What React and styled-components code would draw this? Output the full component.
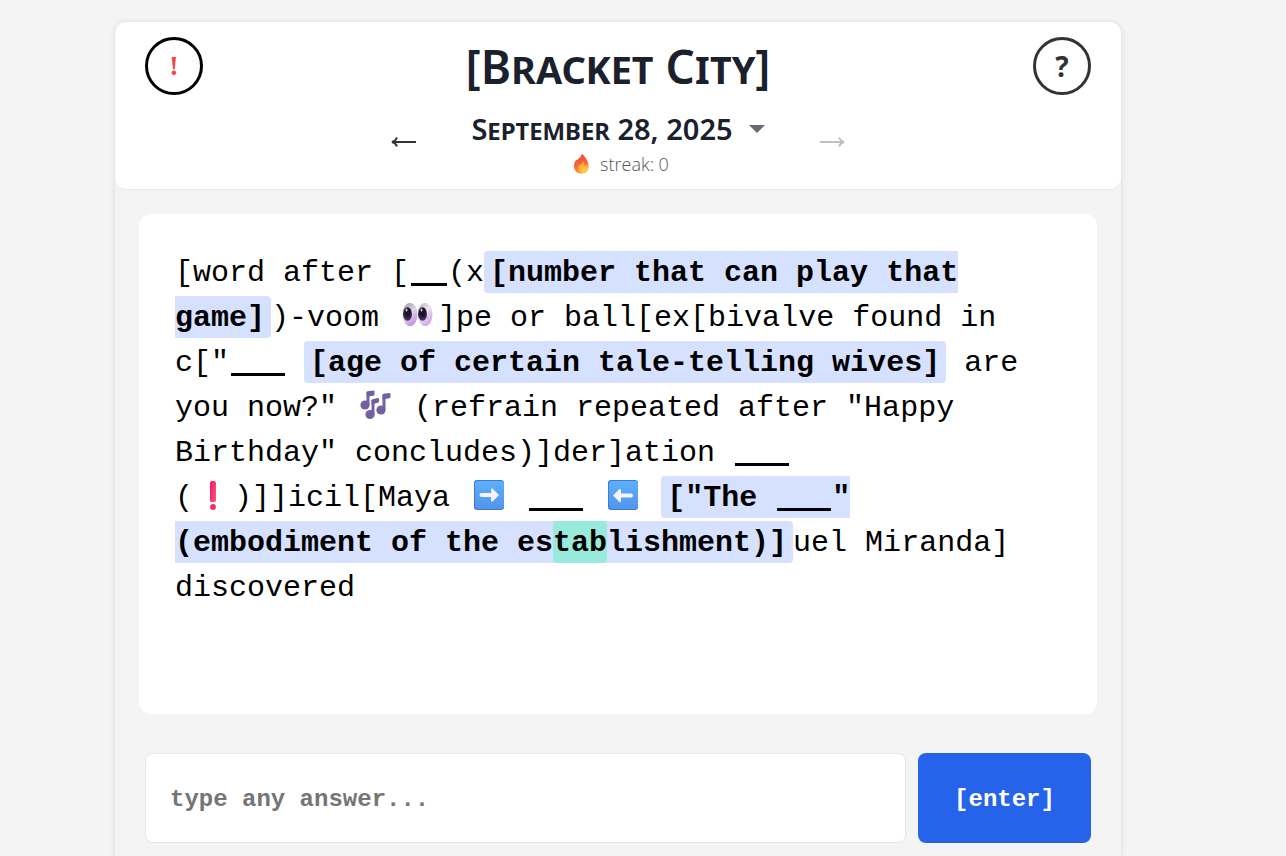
import React from "react";
import styled, { createGlobalStyle } from "styled-components";

const sans = '"Noto Sans", "Open Sans", sans-serif';
const mono = '"Liberation Mono", monospace';

const GlobalStyle = createGlobalStyle`
  *, *::before, *::after { box-sizing: border-box; }
  body { margin: 0; background: #f4f4f4; font-family: ${sans}; color: #1a202c; }
  button, input { font: inherit; color: inherit; }
  button { padding: 0; border: 0; background: none; cursor: pointer; }
`;

const Page = styled.div`
  display: flex;
  justify-content: center;
  min-height: 100vh;
  padding: 21px 50px 0 0;
`;

const Game = styled.main`
  display: flex;
  flex-direction: column;
  width: 100%;
  max-width: 1008px;
  border: 1px solid #e2e8f0;
  border-bottom: 0;
  border-radius: 12px 12px 0 0;
  box-shadow: 0 1px 6px rgba(0, 0, 0, 0.08);
`;

const Header = styled.header`
  display: grid;
  grid-template-columns: 58px 1fr 58px;
  align-items: start;
  padding: 15px 30px 12px;
  background: #fff;
  border-bottom: 1px solid #e2e8f0;
  border-radius: 12px;
`;

const RoundButton = styled.button`
  width: 58px;
  height: 58px;
  border: 3px solid ${(p) => p.$ring};
  border-radius: 50%;
  color: ${(p) => p.$ink};
  font-family: ${(p) => p.$family};
  font-size: 28px;
  font-weight: 700;
  line-height: 52px;
  text-align: center;
`;

const Masthead = styled.div`
  display: flex;
  flex-direction: column;
  align-items: center;
  gap: 11px;
`;

const Title = styled.h1`
  margin: 0;
  font-size: 46px;
  font-weight: 600;
  line-height: 58px;
  font-variant: small-caps;
  white-space: nowrap;
`;

const TitleBracket = styled.span`
  font-variant: normal;
`;

const DateNav = styled.nav`
  display: flex;
  align-items: center;
  justify-content: space-between;
  width: 100%;
  max-width: 456px;
`;

const ArrowButton = styled.button`
  display: flex;
  align-items: center;
  height: 30px;
  color: #333;
  &:disabled { color: #c0c0c0; cursor: default; }
`;

const DateBlock = styled.div`
  display: flex;
  flex-direction: column;
  align-items: center;
`;

const DateButton = styled.button`
  display: flex;
  align-items: center;
  gap: 16px;
  font-size: 29px;
  font-weight: 600;
  line-height: 45px;
  font-variant: small-caps;
  white-space: nowrap;
`;

const Streak = styled.div`
  display: flex;
  align-items: center;
  gap: 10px;
  padding-left: 6px;
  color: #555;
  font-family: "Open Sans", sans-serif;
  font-size: 18px;
  font-weight: 300;
  line-height: 26px;
`;

const Puzzle = styled.section`
  min-height: 500px;
  margin: 24px;
  padding: 37px 36px 35px;
  border-radius: 12px;
  background: #fff;
`;

const Clue = styled.p`
  margin: 0;
  color: #000;
  font-family: ${mono};
  font-size: 30px;
  line-height: 45px;
`;

const Active = styled.strong`
  padding: 5px 6px 3px;
  border-radius: 4px;
  background: #d6e0ff;
  font-weight: 700;
`;

const Found = styled.mark`
  padding: 5px 0 3px;
  border-radius: 4px;
  background: #98ebdc;
  color: inherit;
`;

const Unbroken = styled.span`
  white-space: nowrap;
`;

const BlankLine = styled.span`
  display: inline-block;
  width: ${(p) => p.$letters * 18}px;
  height: 3px;
  margin: 0 1px 0 2px;
  background: #000;
  vertical-align: -5px;
`;

const Glyph = styled.svg`
  width: 41px;
  height: 32px;
  vertical-align: -4px;
`;

const AnswerForm = styled.form`
  display: flex;
  gap: 12px;
  padding: 15px 30px 13px;
`;

const AnswerInput = styled.input`
  flex: 1;
  min-width: 0;
  height: 90px;
  padding: 2px 24px 0;
  border: 1px solid #e2e8f0;
  border-radius: 8px;
  background: #fff;
  font-family: ${mono};
  font-size: 24px;
  font-weight: 700;
  &::placeholder { color: #757575; opacity: 1; }
`;

const EnterButton = styled.button`
  width: 173px;
  height: 90px;
  padding-top: 2px;
  border-radius: 8px;
  background: #2563eb;
  color: #fff;
  font-family: ${mono};
  font-size: 24px;
  font-weight: 700;
`;

function Blank({ letters = 3 }) {
  return <BlankLine $letters={letters} role="img" aria-label="blank" />;
}

function LongArrow({ flip }) {
  return (
    <svg width="27" height="14" viewBox="0 0 27 14" fill="none" stroke="currentColor" strokeWidth="2" aria-hidden="true">
      <path d={flip ? "M1 7H25M20 2.500C21 5 23 6.500 25 7C23 7.500 21 9 20 11.500" : "M26 7H2M7 2.500C6 5 4 6.500 2 7C4 7.500 6 9 7 11.500"} />
    </svg>
  );
}

function Flame() {
  return (
    <svg width="17" height="20" viewBox="0 0 17 20" aria-hidden="true">
      <defs>
        <linearGradient id="flameOuter" x1="0" y1="0" x2="0.3" y2="1">
          <stop offset="0" stopColor="#e8313f" />
          <stop offset="0.55" stopColor="#f8643a" />
          <stop offset="1" stopColor="#ff8b35" />
        </linearGradient>
        <radialGradient id="flameInner" cx="0.6" cy="0.8" r="0.7">
          <stop offset="0" stopColor="#ffd83d" />
          <stop offset="1" stopColor="#ff9a36" />
        </radialGradient>
      </defs>
      <path fill="url(#flameOuter)" d="M9 0C12 2.500 15.500 7 15.500 12C15.500 16.500 13 19.500 8.500 19.500C4 19.500 1 16.500 1 12C1 8.500 2.500 6.500 4 5.500L4.500 6L6.500 3.500L7 4C7.500 3 8 1.500 9 0Z" />
      <path fill="url(#flameInner)" d="M10.500 7C10 10 5 10.500 5 14.500C5 17.500 7 19 9.500 19C13 19 15 16.500 15 13.500C15 12 14.500 11 14 10C13.500 12 12 12 11.500 11.500C11 10 11.500 8.500 10.500 7Z" />
    </svg>
  );
}

function Eyes() {
  return (
    <Glyph viewBox="0 0 41 32" role="img" aria-label="eyes">
      <defs>
        <linearGradient id="eyeball" x1="0.2" y1="0" x2="0.7" y2="1">
          <stop offset="0" stopColor="#a09ba0" />
          <stop offset="0.45" stopColor="#e0d8e4" />
          <stop offset="1" stopColor="#c58be0" />
        </linearGradient>
        <linearGradient id="eyeballLight" x1="0" y1="0" x2="0.7" y2="1">
          <stop offset="0" stopColor="#b5aeb8" />
          <stop offset="0.5" stopColor="#ebe5ef" />
          <stop offset="1" stopColor="#cfa4e4" />
        </linearGradient>
      </defs>
      <ellipse cx="13" cy="16.500" rx="7.500" ry="11.500" fill="url(#eyeball)" />
      <ellipse cx="28" cy="16.500" rx="7.500" ry="11.500" fill="url(#eyeballLight)" />
      <ellipse cx="10.500" cy="16" rx="4.500" ry="6.800" fill="#402b55" />
      <ellipse cx="25.500" cy="16" rx="4.500" ry="6.800" fill="#402b55" />
      <ellipse cx="10.500" cy="14.500" rx="3.300" ry="4.800" fill="#1c1429" />
      <ellipse cx="25.500" cy="14.500" rx="3.300" ry="4.800" fill="#1c1429" />
      <ellipse cx="9.500" cy="12" rx="1" ry="1.500" fill="#cfc8d6" />
      <ellipse cx="24.500" cy="12" rx="1" ry="1.500" fill="#cfc8d6" />
    </Glyph>
  );
}

function Notes() {
  return (
    <Glyph viewBox="0 0 41 32" role="img" aria-label="musical notes">
      <g fill="#7361a5">
        <circle cx="10" cy="17" r="4.600" />
        <circle cx="15" cy="26.500" r="4.600" />
        <circle cx="26" cy="22" r="4.600" />
      </g>
      <g fill="none" stroke="#7361a5" strokeWidth="3">
        <path d="M13 17.500V4" />
        <path d="M18 27V12" />
        <path d="M29 22V7" />
      </g>
      <path
        fill="#7361a5"
        d="M11.500 4Q11.500 3.300 12.500 3.200L18.500 2.500Q19.500 2.500 19.500 3.500V6.500Q19.500 7.500 18.500 7.700L11.500 8.500ZM16.500 12.500Q16.500 11.500 17.500 11.300L22.500 10Q24 9.800 24 11V13.500Q24 14.500 23 14.800L16.500 16.500ZM27.500 7Q27.500 6 28.500 5.800L34 5Q35.500 5 35.500 6V9Q35.500 10 34.500 10.200L27.500 11.500Z"
      />
    </Glyph>
  );
}

function Exclamation() {
  return (
    <Glyph viewBox="0 0 41 32" role="img" aria-label="exclamation mark">
      <defs>
        <linearGradient id="exclaim" x1="0" y1="0" x2="1" y2="0.6">
          <stop offset="0" stopColor="#ed1767" />
          <stop offset="1" stopColor="#fb5070" />
        </linearGradient>
      </defs>
      <path fill="url(#exclaim)" d="M17 5Q17 3 19 3H21Q23 3 23 5V22Q23 24 21.500 24H18.500Q17 24 17 22Z" />
      <circle cx="20" cy="29" r="2.900" fill="#f4305f" />
    </Glyph>
  );
}

function ArrowTile({ left }) {
  return (
    <Glyph viewBox="0 0 41 32" role="img" aria-label={left ? "left arrow" : "right arrow"}>
      <defs>
        <linearGradient id="tile" x1="0" y1="0" x2="0" y2="1">
          <stop offset="0" stopColor="#5bb1fb" />
          <stop offset="1" stopColor="#5394ec" />
        </linearGradient>
      </defs>
      <rect x="6" y="2" width="30" height="30" rx="3" fill="#4079cf" />
      <rect x="7" y="3" width="29" height="28" rx="3" fill="url(#tile)" />
      <path
        fill="#f8f1ff"
        d={
          left
            ? "M11 17.500L17.500 11Q19 10.500 19 12V15.500H29Q31 15.500 31 17.500Q31 19.500 29 19.500H19V23Q19 24.500 17.500 24Z"
            : "M31 17L24.500 10.500Q23 10 23 11.500V15H13.500Q11.500 15 11.500 17Q11.500 19 13.500 19H23V22.500Q23 24 24.500 23.500Z"
        }
      />
    </Glyph>
  );
}

export default function App() {
  return (
    <>
      <GlobalStyle />
      <Page>
        <Game>
          <Header>
            <RoundButton type="button" $ring="#000" $ink="#ef4444" $family='"Liberation Serif", serif'>
              !
            </RoundButton>
            <Masthead>
              <Title>
                <TitleBracket>[</TitleBracket>Bracket City<TitleBracket>]</TitleBracket>
              </Title>
              <DateNav aria-label="Puzzle date">
                <ArrowButton type="button" aria-label="Previous day">
                  <LongArrow />
                </ArrowButton>
                <DateBlock>
                  <DateButton type="button" aria-haspopup="dialog">
                    September 28, 2025
                    <svg width="16" height="8" viewBox="0 0 16 8" aria-hidden="true">
                      <path d="M0 0H16L8 8Z" fill="#666b75" />
                    </svg>
                  </DateButton>
                  <Streak>
                    <Flame />
                    <span>streak: 0</span>
                  </Streak>
                </DateBlock>
                <ArrowButton type="button" aria-label="Next day" disabled>
                  <LongArrow flip />
                </ArrowButton>
              </DateNav>
            </Masthead>
            <RoundButton type="button" $ring="#333" $ink="#333" $family={sans}>
              ?
            </RoundButton>
          </Header>

          <Puzzle>
            <Clue>
              [word after [<Blank letters={2} />(x<Active>[number that can play that game]</Active>)-voom{" "}
              <Unbroken><Eyes />]pe</Unbroken> or ball[ex[bivalve found in{" "}
              <Unbroken>c["<Blank /></Unbroken>{" "}
              <Active>[age of certain tale-telling wives]</Active> are you now?" <Notes />{" "}
              (refrain repeated after "Happy Birthday" concludes)]der]ation <Blank />{" "}
              <Unbroken>(<Exclamation />)]]icil[Maya</Unbroken> <ArrowTile /> <Blank /> <ArrowTile left />{" "}
              <Active>
                ["The <Blank />" (embodiment of the es<Found>tab</Found>lishment)]
              </Active>
              uel Miranda] discovered
            </Clue>
          </Puzzle>

          <AnswerForm onSubmit={(event) => event.preventDefault()}>
            <AnswerInput type="text" aria-label="Answer" placeholder="type any answer..." />
            <EnterButton type="submit">[enter]</EnterButton>
          </AnswerForm>
        </Game>
      </Page>
    </>
  );
}
